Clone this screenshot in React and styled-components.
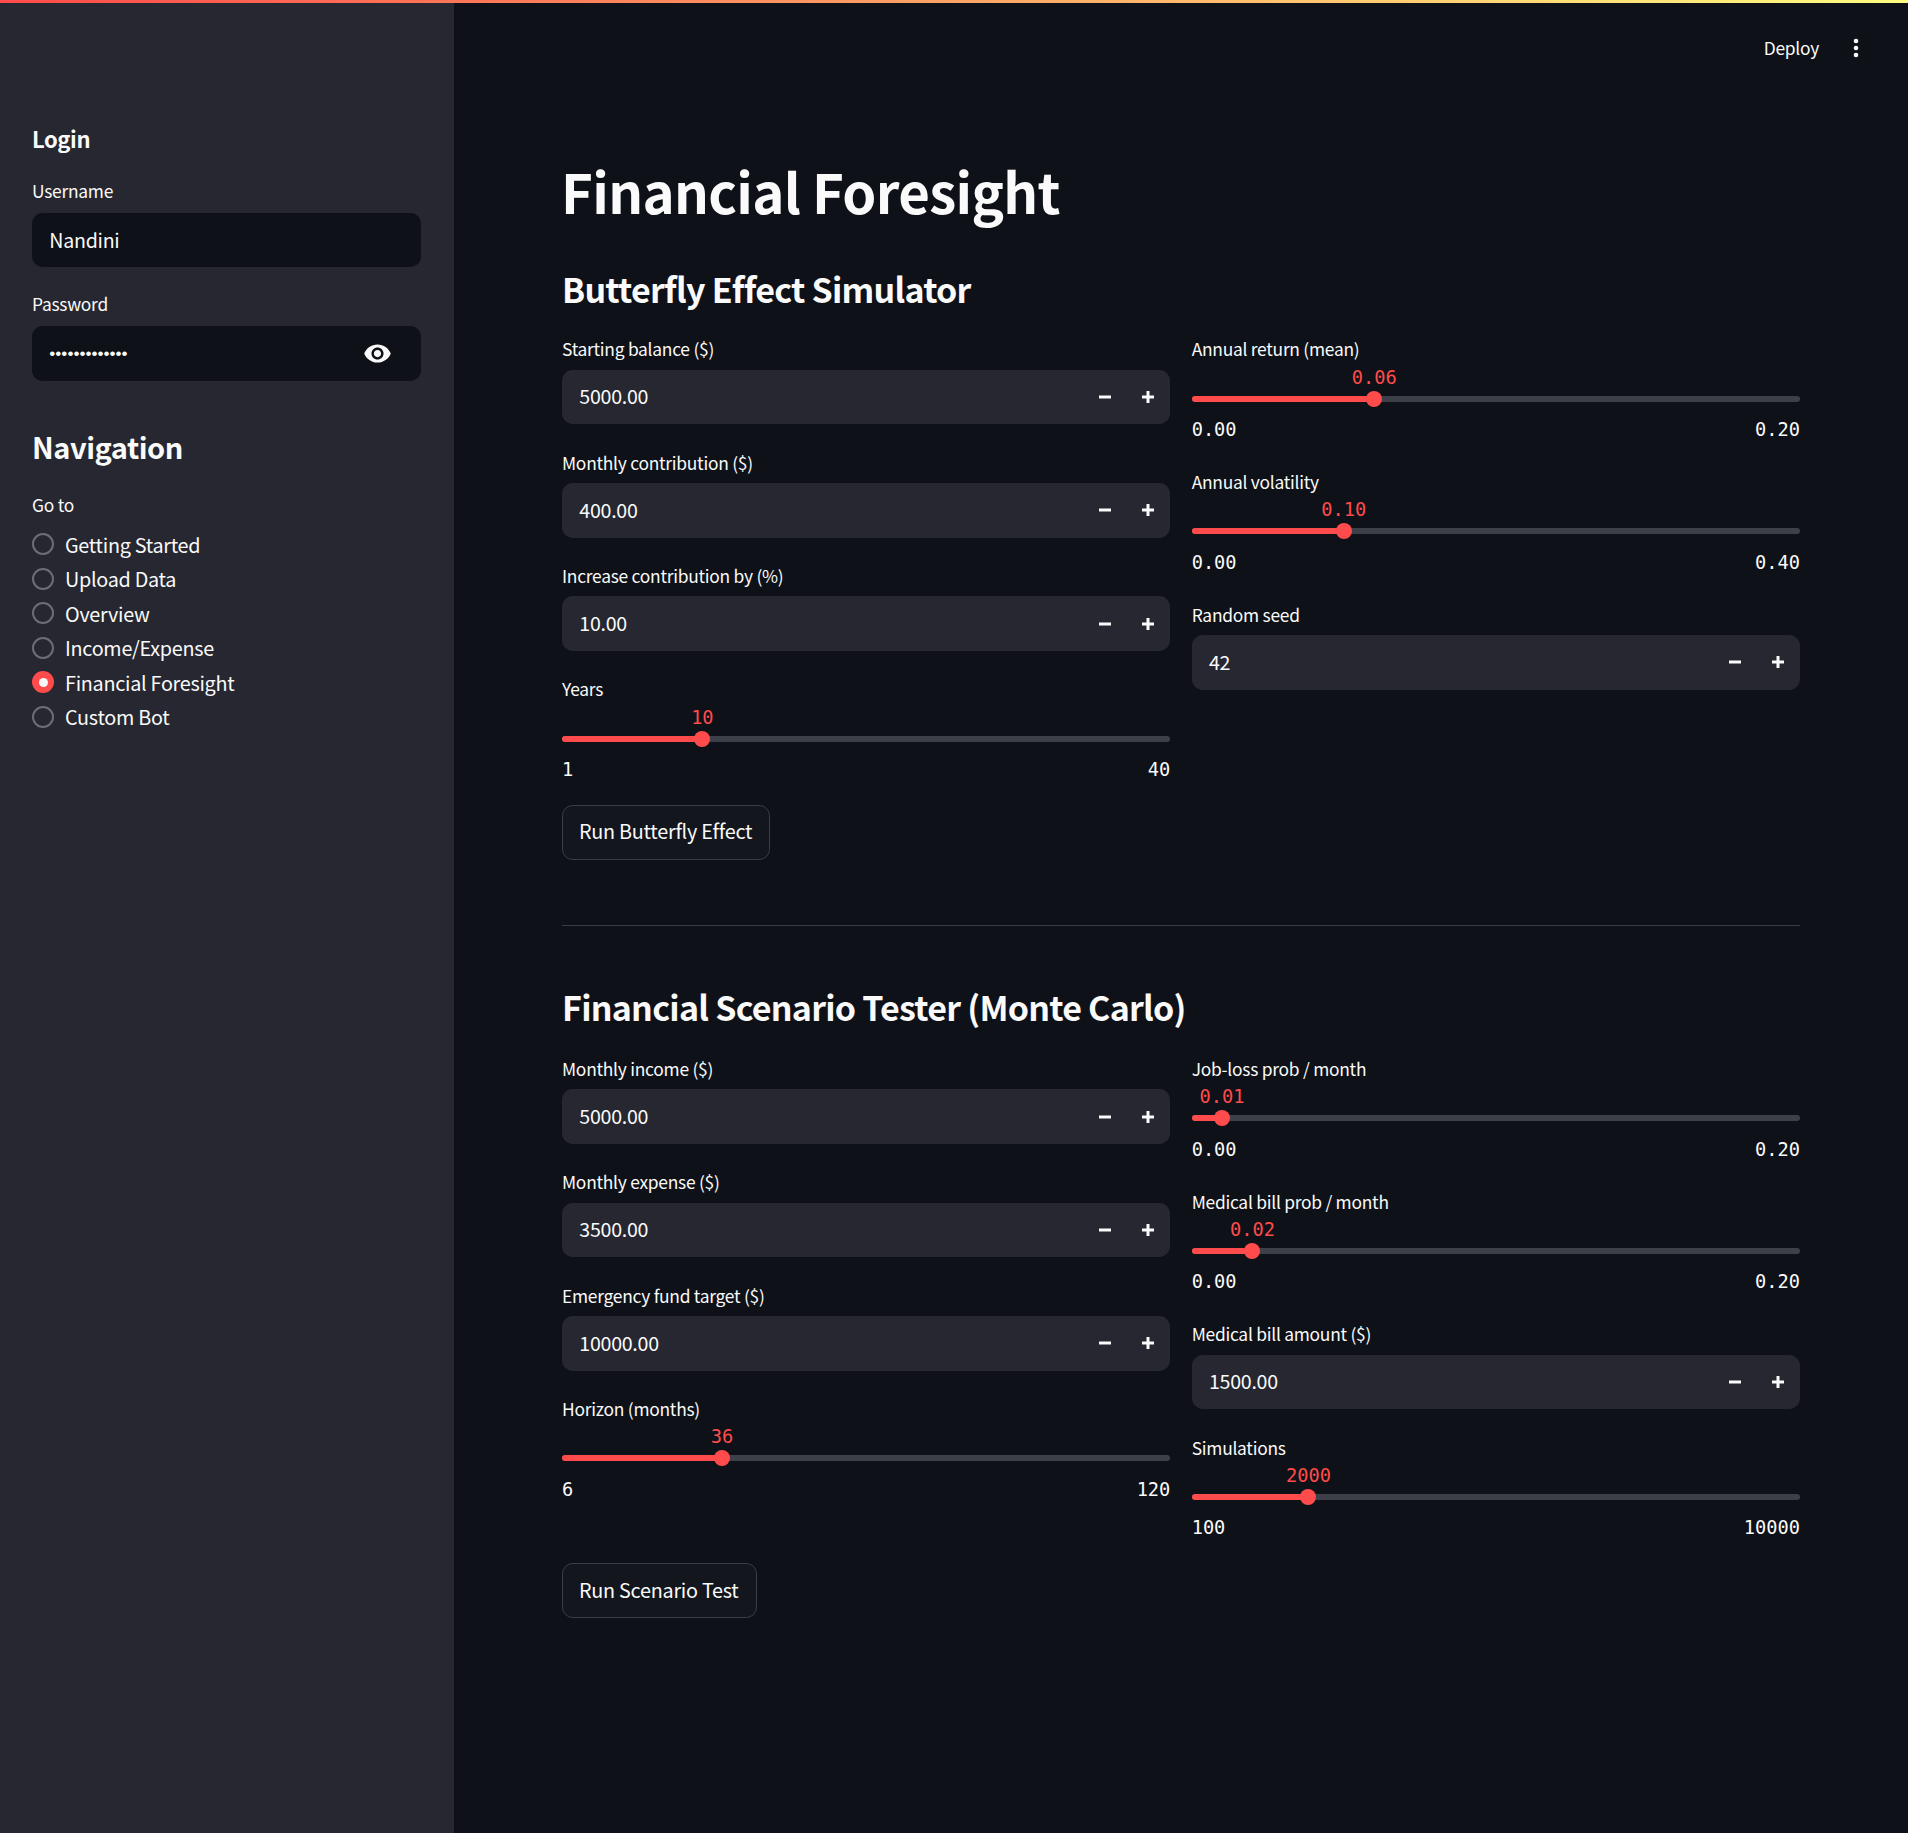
import React from 'react'
import styled, { createGlobalStyle } from 'styled-components'

const GlobalStyle = createGlobalStyle`
  html, body {
    margin: 0;
    padding: 0;
    background: #0e1117;
  }

  * {
    box-sizing: border-box;
  }
`

const Page = styled.div`
  position: relative;
  display: flex;
  min-height: 1833px;
  background: #0e1117;
  color: #fafafa;
  font-family: "Noto Sans CJK SC", "Noto Sans", sans-serif;
`

const Decoration = styled.div`
  position: absolute;
  top: 0;
  left: 0;
  right: 0;
  height: 3px;
  background: linear-gradient(90deg, #ff4b4b, #fffd80);
`

const Sidebar = styled.aside`
  flex: 0 0 454px;
  padding: 119px 33px 0 32px;
  background: #262730;
`

const Login = styled.h3`
  margin: 0 0 18.5px;
  font-size: 22px;
  line-height: 38px;
  font-weight: 600;
  letter-spacing: -0.4px;
`

const SideStack = styled.div`
  display: flex;
  flex-direction: column;
  gap: 21.33px;
`

const Navigation = styled.h2`
  margin: 43px 0 21px;
  font-size: 29px;
  line-height: 44px;
  font-weight: 600;
  letter-spacing: -0.45px;
`

const GoTo = styled.div`
  margin-bottom: 6px;
  font-size: 17.4px;
  line-height: 32px;
  letter-spacing: -0.26px;
`

const RadioItem = styled.div`
  display: flex;
  align-items: center;
  gap: 11px;
  height: 34.5px;
  font-size: 19.8px;
  letter-spacing: -0.28px;
`

const RadioMark = styled.span`
  display: flex;
  align-items: center;
  justify-content: center;
  width: 22px;
  height: 22px;
  border-radius: 50%;
  border: ${p => (p.$on ? 'none' : '2px solid #6c6d75')};
  background: ${p => (p.$on ? '#ff4b4b' : 'transparent')};

  &::after {
    content: '';
    display: ${p => (p.$on ? 'block' : 'none')};
    width: 9px;
    height: 9px;
    border-radius: 50%;
    background: #f6f6f9;
  }
`

const Main = styled.main`
  flex: 1;
  min-width: 0;
`

const Toolbar = styled.div`
  display: flex;
  align-items: center;
  justify-content: flex-end;
  gap: 33px;
  height: 96px;
  padding-right: 48px;
  font-size: 17.4px;
  letter-spacing: -0.26px;
`

const DeployLink = styled.span`
  padding-bottom: 1px;
`

const Kebab = styled.svg`
  width: 8px;
  height: 20px;
  fill: #fafafa;
`

const Content = styled.div`
  padding: 59.5px 108px 0;
`

const Title = styled.h1`
  margin: 0 0 40px -1px;
  font-size: 54.5px;
  line-height: 70px;
  font-weight: 700;
  letter-spacing: -0.65px;
`

const Subtitle = styled.h2`
  margin: 0 0 21.83px;
  font-size: 34px;
  line-height: 45px;
  font-weight: 600;
  letter-spacing: -0.75px;
`

const Columns = styled.div`
  display: grid;
  grid-template-columns: 1fr 1fr;
  gap: 21.33px;
  align-items: start;
`

const Column = styled.div`
  display: flex;
  flex-direction: column;
  gap: 21.33px;
`

const Label = styled.div`
  height: 32px;
  margin-bottom: 5.33px;
  font-size: 17.4px;
  line-height: 34px;
  letter-spacing: -0.26px;
`

const SideLabel = styled(Label)`
  line-height: 30px;
`

const InputBox = styled.div`
  display: flex;
  align-items: center;
  height: 54.67px;
  padding-left: 17.33px;
  border-radius: 10.67px;
  background: ${p => (p.$side ? '#0e1117' : '#262730')};
  font-size: 19.6px;
  letter-spacing: -0.27px;
`

const InputText = styled.div`
  flex: 1;
  padding-bottom: 2px;
`

const Dots = styled.div`
  flex: 1;
  font-family: "Liberation Sans", sans-serif;
  font-size: 17.2px;
  letter-spacing: 0;
`

const EyeButton = styled.svg`
  width: 29px;
  height: 29px;
  margin-right: 29px;
  fill: #fafafa;
`

const StepButton = styled.div`
  display: flex;
  align-items: center;
  justify-content: center;
  width: 43px;
  height: 100%;

  svg {
    width: 12px;
    height: 12px;
    fill: #fafafa;
  }
`

const Steppers = styled.div`
  display: flex;
  align-self: stretch;
  padding-right: 1px;
`

const SliderBody = styled.div`
  padding-top: 26px;
  height: 74px;
`

const Rail = styled.div`
  position: relative;
  height: 6px;
  border-radius: 3px;
  background: #3d4048;
`

const RailFill = styled.div`
  height: 100%;
  border-radius: 3px;
  background: #ff4b4b;
`

const Thumb = styled.span`
  position: absolute;
  top: 50%;
  width: 16px;
  height: 16px;
  border-radius: 50%;
  background: #ff4b4b;
  transform: translate(-50%, -50%);
`

const ThumbValue = styled.span`
  position: absolute;
  bottom: 12px;
  transform: translateX(-50%);
  color: #ff4b4b;
  font-family: "DejaVu Sans Mono", monospace;
  font-size: 18.67px;
  line-height: 24px;
  white-space: nowrap;
`

const Ticks = styled.div`
  display: flex;
  justify-content: space-between;
  margin-top: 16.5px;
  font-family: "DejaVu Sans Mono", monospace;
  font-size: 18.67px;
  line-height: 24px;
`

const RunButton = styled.div`
  display: inline-flex;
  align-items: center;
  align-self: flex-start;
  height: 54.67px;
  padding: 0 17px 3px 16px;
  border: 1px solid #3c3e46;
  border-radius: 10.67px;
  background: #13161d;
  font-size: 19.8px;
  letter-spacing: -0.25px;
`

const ScenarioButton = styled(RunButton)`
  margin-top: 21.33px;
`

const Divider = styled.hr`
  margin: 65px 0 0;
  border: none;
  border-top: 1px solid #3a3c44;
`

const ScenarioTitle = styled(Subtitle)`
  margin-top: 58.5px;
  margin-bottom: 22.83px;
`

function NumberField({ label, value }) {
  return (
    <div>
      <Label>{label}</Label>
      <InputBox>
        <InputText>{value}</InputText>
        <Steppers>
          <StepButton>
            <svg viewBox="0 0 8 8"><path d="M0 3v2h8V3H0z" /></svg>
          </StepButton>
          <StepButton>
            <svg viewBox="0 0 8 8"><path d="M3 0v3H0v2h3v3h2V5h3V3H5V0H3z" /></svg>
          </StepButton>
        </Steppers>
      </InputBox>
    </div>
  )
}

function SliderField({ label, value, min, max, text, minText, maxText }) {
  const pct = ((value - min) / (max - min)) * 100
  return (
    <div>
      <Label>{label}</Label>
      <SliderBody>
        <Rail>
          <RailFill style={{ width: `${pct}%` }} />
          <Thumb style={{ left: `${pct}%` }} />
          <ThumbValue style={{ left: `${pct}%` }}>{text}</ThumbValue>
        </Rail>
        <Ticks>
          <span>{minText}</span>
          <span>{maxText}</span>
        </Ticks>
      </SliderBody>
    </div>
  )
}

const pages = ['Getting Started', 'Upload Data', 'Overview', 'Income/Expense', 'Financial Foresight', 'Custom Bot']

export default function App() {
  return (
    <Page>
      <GlobalStyle />
      <Decoration />
      <Sidebar>
        <Login>Login</Login>
        <SideStack>
          <div>
            <SideLabel>Username</SideLabel>
            <InputBox $side>
              <InputText>Nandini</InputText>
            </InputBox>
          </div>
          <div>
            <SideLabel>Password</SideLabel>
            <InputBox $side>
              <Dots>•••••••••••••</Dots>
              <EyeButton viewBox="0 0 24 24">
                <path d="M12 4.5C7 4.5 2.73 7.61 1 12c1.73 4.39 6 7.5 11 7.5s9.27-3.11 11-7.5c-1.73-4.39-6-7.5-11-7.5zM12 17c-2.76 0-5-2.24-5-5s2.24-5 5-5 5 2.24 5 5-2.24 5-5 5zm0-8c-1.66 0-3 1.34-3 3s1.34 3 3 3 3-1.34 3-3-1.34-3-3-3z" />
              </EyeButton>
            </InputBox>
          </div>
        </SideStack>
        <Navigation>Navigation</Navigation>
        <GoTo>Go to</GoTo>
        {pages.map(page => (
          <RadioItem key={page}>
            <RadioMark $on={page === 'Financial Foresight'} />
            {page}
          </RadioItem>
        ))}
      </Sidebar>
      <Main>
        <Toolbar>
          <DeployLink>Deploy</DeployLink>
          <Kebab viewBox="0 0 8 20">
            <circle cx="4" cy="3" r="2.3" />
            <circle cx="4" cy="10" r="2.3" />
            <circle cx="4" cy="17" r="2.3" />
          </Kebab>
        </Toolbar>
        <Content>
          <Title>Financial Foresight</Title>
          <Subtitle>Butterfly Effect Simulator</Subtitle>
          <Columns>
            <Column>
              <NumberField label="Starting balance ($)" value="5000.00" />
              <NumberField label="Monthly contribution ($)" value="400.00" />
              <NumberField label="Increase contribution by (%)" value="10.00" />
              <SliderField label="Years" value={10} min={1} max={40} text="10" minText="1" maxText="40" />
              <RunButton>Run Butterfly Effect</RunButton>
            </Column>
            <Column>
              <SliderField label="Annual return (mean)" value={0.06} min={0} max={0.2} text="0.06" minText="0.00" maxText="0.20" />
              <SliderField label="Annual volatility" value={0.1} min={0} max={0.4} text="0.10" minText="0.00" maxText="0.40" />
              <NumberField label="Random seed" value="42" />
            </Column>
          </Columns>
          <Divider />
          <ScenarioTitle>Financial Scenario Tester (Monte Carlo)</ScenarioTitle>
          <Columns>
            <Column>
              <NumberField label="Monthly income ($)" value="5000.00" />
              <NumberField label="Monthly expense ($)" value="3500.00" />
              <NumberField label="Emergency fund target ($)" value="10000.00" />
              <SliderField label="Horizon (months)" value={36} min={6} max={120} text="36" minText="6" maxText="120" />
            </Column>
            <Column>
              <SliderField label="Job-loss prob / month" value={0.01} min={0} max={0.2} text="0.01" minText="0.00" maxText="0.20" />
              <SliderField label="Medical bill prob / month" value={0.02} min={0} max={0.2} text="0.02" minText="0.00" maxText="0.20" />
              <NumberField label="Medical bill amount ($)" value="1500.00" />
              <SliderField label="Simulations" value={2000} min={100} max={10000} text="2000" minText="100" maxText="10000" />
            </Column>
          </Columns>
          <ScenarioButton>Run Scenario Test</ScenarioButton>
        </Content>
      </Main>
    </Page>
  )
}
